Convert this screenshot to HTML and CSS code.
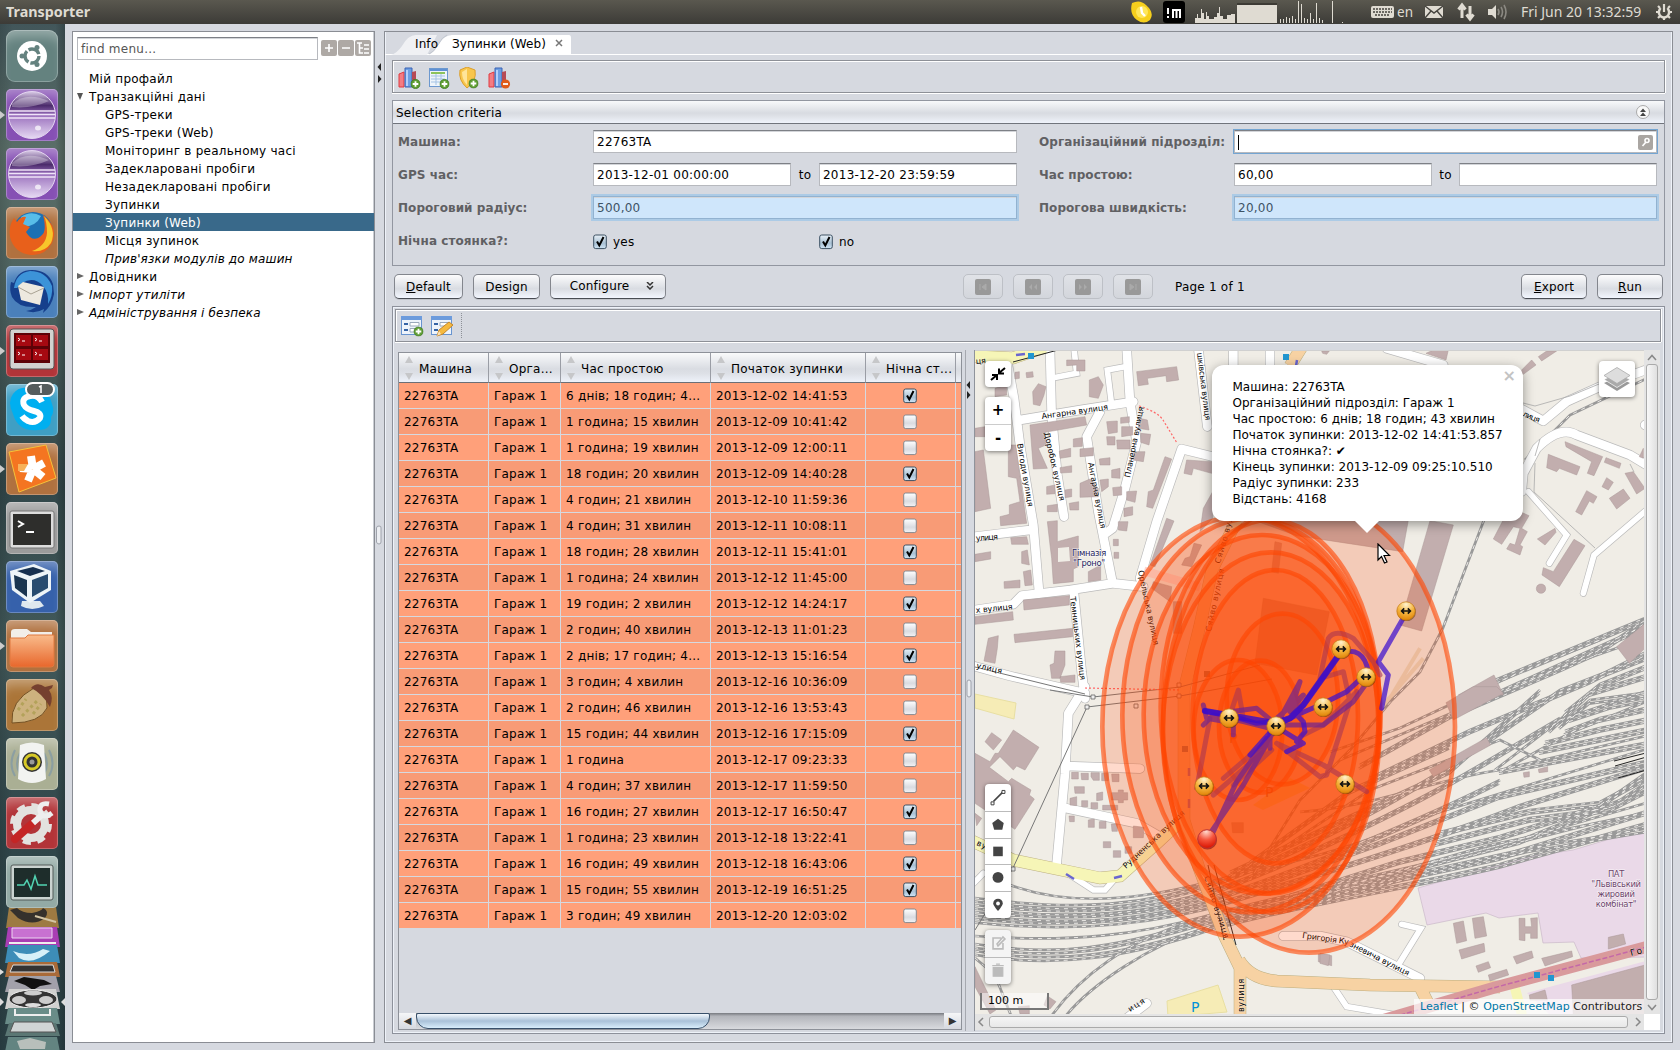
FILE: index.html
```html
<!DOCTYPE html>
<html lang="uk">
<head>
<meta charset="utf-8">
<title>Transporter</title>
<link rel="stylesheet" href="styles.css">
</head>
<body>
<svg class="defs" width="0" height="0">
<defs>
<linearGradient id="sphere" x1="0" y1="0" x2="0" y2="1"><stop offset="0" stop-color="#d9cbe6"/><stop offset=".3" stop-color="#4b2a6b"/><stop offset=".5" stop-color="#9a70bd"/><stop offset="1" stop-color="#e6d9f3"/></linearGradient>
<linearGradient id="box" x1="0" y1="0" x2="0" y2="1"><stop offset="0" stop-color="#fff"/><stop offset=".6" stop-color="#d9dbe0"/><stop offset="1" stop-color="#f2f3f6"/></linearGradient>
<linearGradient id="boxon" x1="0" y1="0" x2="0" y2="1"><stop offset="0" stop-color="#e9f1f8"/><stop offset=".6" stop-color="#a9c1d4"/><stop offset="1" stop-color="#cfe4f5"/></linearGradient>
<radialGradient id="gold" cx=".5" cy=".15" r=".9"><stop offset="0" stop-color="#fff3cf"/><stop offset=".5" stop-color="#f5b540"/><stop offset="1" stop-color="#df7f00"/></radialGradient>
<radialGradient id="ruby" cx=".45" cy=".1" r=".9"><stop offset="0" stop-color="#ffd9cc"/><stop offset=".5" stop-color="#f5553d"/><stop offset="1" stop-color="#d81200"/></radialGradient>
<linearGradient id="folder" x1="0" y1="0" x2="0" y2="1"><stop offset="0" stop-color="#f9bb8b"/><stop offset="1" stop-color="#e8672c"/></linearGradient>
<symbol id="off" viewBox="0 0 14 16"><rect x=".7" y="1" width="12.6" height="13.6" rx="2" fill="url(#box)" stroke="#868a91"/></symbol>
<symbol id="on" viewBox="0 0 14 16"><rect x=".7" y="1" width="12.6" height="13.6" rx="2" fill="url(#boxon)" stroke="#3c5163"/><path d="M4 7.5L6.3 11.5L10.5 3" fill="none" stroke="#000" stroke-width="2"/></symbol>
<symbol id="eclipse" viewBox="0 0 52 52"><circle cx="26" cy="26" r="23.5" fill="url(#sphere)" stroke="#e3d5f0"/><path d="M3 22H49M3 25.5H49M3 29H49" stroke="#efe4f8" stroke-width="1.4"/><path d="M6 15Q20 2 43 12Q26 20 6 18Z" fill="#fff" opacity=".3"/><ellipse cx="32" cy="39" rx="3" ry="2.5" fill="#fff" opacity=".7"/></symbol>
<symbol id="chart" viewBox="0 0 22 22"><path d="M1 7L6 5V20H1Z" fill="#f47c83" stroke="#e03a40"/><path d="M7 1H14V20H7Z" fill="#6d9fe3" stroke="#3a62b5"/><path d="M9 3V19" stroke="#b3d0fb" stroke-width="2"/><path d="M14 5L18 4V19H14Z" fill="#b64a56"/></symbol>
<symbol id="plus" viewBox="0 0 10 10"><circle cx="5" cy="5" r="4.6" fill="#5f9e33" stroke="#3f7a21" stroke-width=".8"/><path d="M5 2.2V7.8M2.2 5H7.8" stroke="#fff" stroke-width="1.8"/></symbol>
<symbol id="stop" viewBox="-10 -10 20 20"><circle cx=".6" cy="1" r="9.3" fill="#5a3400" opacity=".5"/><circle r="9.2" fill="url(#gold)" stroke="#c47a11" stroke-width=".7"/><path d="M-4 0H4M-1.8-2.6L-4.4 0L-1.8 2.6M1.8-2.6L4.4 0L1.8 2.6" fill="none" stroke="#111" stroke-width="1.6"/></symbol>
</defs>
</svg>

<header class="topbar">
  <span class="app-name">Transporter</span>
  <svg class="tray" width="348" height="24" viewBox="1128 0 348 24">
    <path d="M1132 3Q1140 -1 1146 5Q1155 13 1150 20Q1144 25 1137 20Q1129 14 1132 3Z" fill="#f6cf1d"/><circle cx="1142" cy="12" r="6" fill="#ffe65b"/><path d="M1141 7L1142 13L1145 16" fill="none" stroke="#fff" stroke-width="2.4"/>
    <rect x="1163" y="1" width="22" height="22" rx="3" fill="#000"/><path d="M1168 8V14M1168 16V18M1173 18V9M1173 10H1180V18M1176.5 10V18" fill="none" stroke="#fff" stroke-width="2"/>
    <path d="M1195 23V18H1197V14H1198V18H1201V9H1202V13H1204V19H1206V12H1207V16H1209V19H1214V17H1217V13H1219V7H1220V16H1223V19H1227V15H1231V14H1235V23Z" fill="#dfdbd2"/>
    <path d="M1237 5H1277V23H1237Z" fill="#dfdbd2"/><path d="M1237 4H1277" stroke="#24231f"/>
    <path d="M1280.500 23V19M1283.500 23V19M1286.500 23V17M1289.500 23V18M1292.500 23V16M1295.500 23V19M1298.500 23V1M1301.500 23V4M1304.500 23V18M1307.500 23V19M1310.500 23V13M1313.500 23V19M1316.500 23V3M1319.500 23V18M1322.500 23V20M1332.500 23V1M1342.500 23V22" stroke="#dfdbd2" fill="none"/>
    <rect x="1371" y="6" width="23" height="12" rx="2" fill="#dfdbd2"/><path d="M1373 9H1392M1373 12H1392M1375 15H1390" stroke="#45443f" stroke-width="1.3" stroke-dasharray="2 1"/>
    <text x="1397" y="17" class="tray-text" textLength="16" lengthAdjust="spacingAndGlyphs">en</text>
    <rect x="1425" y="6" width="18" height="12" fill="#dfdbd2"/><path d="M1425 6L1434 13L1443 6M1425 18L1431 11M1443 18L1437 11" stroke="#45443f" stroke-width="1.4" fill="none"/>
    <path d="M1462 18V6M1458.500 9.500L1462 5L1465.500 9.500M1470 6V18M1466.500 14.500L1470 19L1473.500 14.500" stroke="#dfdbd2" stroke-width="3" fill="none"/>
  </svg>
  <svg class="tray-end" width="22" height="24" viewBox="0 0 22 24"><path d="M0 9H4L8 5V19L4 15H0Z" fill="#dfdbd2"/><path d="M10 9Q12 12 10 15M13 7Q16 12 13 17M16 5Q20 12 16 19" stroke="#8b8982" stroke-width="1.6" fill="none"/></svg>
  <span class="clock">Fri Jun 20 13:32:59</span>
  <svg class="cog" width="18" height="24" viewBox="0 0 18 24"><path d="M5.500 8Q2 13 6 16.500Q9 18.500 12 16.500Q16 13 12.500 8" fill="none" stroke="#dfdbd2" stroke-width="2.4"/><path d="M9 4V12M9 17V20M1 12H3M15 12H17M3 6L5 8M15 6L13 8M3 18L5 16M15 18L13 16" stroke="#dfdbd2" stroke-width="2.2"/></svg>
</header>

<div class="desktop">
<nav class="launcher">
  <div class="tile t-dash"><svg viewBox="0 0 52 52"><circle cx="26" cy="26" r="15" fill="#fff"/><circle cx="26" cy="26" r="7" fill="none" stroke="#64827f" stroke-width="3.400" stroke-dasharray="12.600 2"/><circle cx="16" cy="26" r="2.500" fill="#64827f"/><circle cx="31" cy="17.500" r="2.500" fill="#64827f"/><circle cx="31" cy="34.500" r="2.500" fill="#64827f"/></svg></div>
  <div class="tile t-violet mark"><svg><use href="#eclipse"/></svg></div>
  <div class="tile t-violet"><svg><use href="#eclipse"/></svg></div>
  <div class="tile t-brown"><svg viewBox="0 0 52 52"><circle cx="27" cy="25" r="20" fill="#1d70b3"/><path d="M15 10Q25 3 35 9Q30 20 16 20Z" fill="#58bde8"/><path d="M37 8Q53 20 46 36Q39 49 25 48Q8 46 4 30Q2 20 8 11L11 15Q15 9 20 10L17 17L24 20L20 25Q27 37 36 28Q41 24 37 8Z" fill="#e8601b"/><path d="M38 9Q51 22 45 36Q38 46 26 44Q40 39 41 26Q41 15 38 9Z" fill="#f7c62b"/></svg></div>
  <div class="tile t-blue"><svg viewBox="0 0 52 52"><path d="M5 16L8 17Q12 4 26 4Q42 4 47 18L48 28Q46 40 37 47L38 43Q30 48 20 45Q26 44 30 41Q12 42 6 31Q3 24 5 16Z" fill="#163f8c"/><path d="M8 22Q10 7 24 5Q40 5 46 20Q47 30 42 38Q43 27 37 20Q28 10 16 17L11 22Z" fill="#3c93d8"/><path d="M12 20L17 16L38 21L34 39L15 34Z" fill="#eee9df"/><path d="M12 21L25 28L38 22" fill="none" stroke="#aaa394"/></svg></div>
  <div class="tile t-red mark"><svg viewBox="0 0 52 52"><rect x="4" y="4" width="44" height="40" rx="3" fill="#d2d2d0" stroke="#555"/><rect x="8" y="8" width="36" height="30" fill="#5d0207"/><path d="M10 10H25V21H10ZM27 10H42V21H27ZM10 24H25V35H10ZM27 24H42V35H27Z" fill="#a60911"/><path d="M12 13L14 14.500L12 16M16 16H19M29 13L31 14.500L29 16M33 16H36M12 27L14 28.500L12 30M16 30H19M29 27L31 28.500L29 30M33 30H36" stroke="#fff" fill="none"/></svg></div>
  <div class="tile t-cyan"><svg viewBox="0 0 52 52"><path d="M7 10Q14 1 24 5Q42 3 46 20Q49 28 45 33Q46 46 32 46Q12 48 7 30Q1 18 7 10Z" fill="#00aff0"/><path d="M36 18Q32 10 24 12Q15 14 18 21Q20 25 28 27Q36 29 34 34Q29 40 22 37Q18 35 16 32" fill="none" stroke="#fff" stroke-width="6"/><rect x="20" y="-1" width="28" height="13" rx="6.500" fill="#555d5d" stroke="#fff" stroke-width="2"/><path d="M33 3L35 2V9" stroke="#fff" stroke-width="1.500" fill="none"/></svg></div>
  <div class="tile t-brown mark"><svg viewBox="0 0 52 52"><path d="M3 9L40 2L50 35L13 49Z" fill="#f47521" stroke="#f6c23a"/><path d="M27 26L25 13M27 26L38 20M27 26L37 34M27 26L22 38M27 26L14 25" stroke="#fff" stroke-width="8"/><path d="M12 21H22L18 28H12Z" fill="#f7b25a"/></svg></div>
  <div class="tile t-gray"><svg viewBox="0 0 52 52"><rect x="4" y="9" width="44" height="37" rx="2" fill="#ddd" stroke="#777"/><rect x="7" y="12" width="38" height="31" fill="#2e2e2c"/><path d="M12 19L17 22L12 25M20 30H28" stroke="#fff" stroke-width="2" fill="none"/></svg></div>
  <div class="tile t-navy"><svg viewBox="0 0 52 52"><path d="M16 40H34L38 45Q26 51 15 45Z" fill="#dfe8ee"/><path d="M4 10L28 3L45 10V29L24 42L6 29Z" fill="#edf4f8"/><path d="M8 14L21 19V36L9 27Z" fill="#1a3550"/><path d="M26 19L42 13V27L26 36Z" fill="#284c70"/><path d="M11 10L27 6L39 10L24 15Z" fill="#163050"/></svg></div>
  <div class="tile t-brown mark"><svg viewBox="0 0 52 52"><path d="M5 12Q5 9 9 9H21L25 12H46V24H5Z" fill="#f2eee9"/><path d="M4 18H19L22 15H48V44Q48 47 45 47H7Q4 47 4 44Z" fill="url(#folder)" stroke="#e0783f"/></svg></div>
  <div class="tile t-tan"><svg viewBox="0 0 52 52"><path d="M28 9Q42 12 41 29Q34 44 6 44Q4 22 28 9Z" fill="#cdb27e" stroke="#745124"/><path d="M12 31L20 20M16 37L31 22M27 35L35 25" stroke="#b3a25a" stroke-width="3" stroke-dasharray="3 3"/><path d="M25 9Q31 2 39 8L47 6L46 9L43 11Q48 18 44 28Q36 14 25 9Z" fill="#75402f"/></svg></div>
  <div class="tile t-sage"><svg viewBox="0 0 52 52"><path d="M9 12Q2 26 9 38M14 15Q8 26 14 36M43 12Q50 26 43 38M38 15Q44 26 38 36" fill="none" stroke="#7793aa" stroke-width="2" opacity=".6"/><path d="M14 7Q26 2 38 7L40 41Q26 49 12 41Z" fill="#f2f3f1"/><circle cx="26" cy="24" r="10" fill="#333"/><circle cx="26" cy="24" r="7" fill="none" stroke="#d7c927" stroke-width="3"/><circle cx="26" cy="24" r="2.500" fill="#999"/></svg></div>
  <div class="tile t-red"><svg viewBox="0 0 52 52"><circle cx="25" cy="27" r="14" fill="none" stroke="#e3e2df" stroke-width="8"/><circle cx="25" cy="27" r="18.500" fill="none" stroke="#e3e2df" stroke-width="5" stroke-dasharray="8 6.500"/><path d="M9 42L27 26" stroke="#c42525" stroke-width="8" stroke-linecap="round"/><path d="M27 26L37 17" stroke="#eee" stroke-width="6"/><path d="M43 7Q33 5 34 14Q37 23 46 16" stroke="#eee" stroke-width="5" fill="none"/></svg></div>
  <div class="tile t-mint"><svg viewBox="0 0 52 52"><rect x="5" y="9" width="42" height="35" rx="2" fill="#cad3d0" stroke="#525b59"/><rect x="8" y="12" width="36" height="29" fill="#1e2d2b"/><path d="M11 29H18L21 24L25 33L29 20L32 29H41" fill="none" stroke="#52d3b2" stroke-width="1.500"/></svg></div>
  <svg class="stack" viewBox="0 905 65 145">
    <path d="M9 905H56L59 926H6Z" fill="#9d7a42"/><path d="M10 908L17 906Q22 911 32 911Q42 909 43 906Q50 909 45 916Q33 925 18 916Z" fill="#35312c"/><path d="M35 914L56 920" stroke="#d3c5a4" stroke-width="2"/>
    <path d="M8 925H57L60 945H5Z" fill="#a93eb4"/><path d="M12 926H52V936H12Z" fill="#c871d1" stroke="#ecd6f0"/><path d="M9 941H56" stroke="#eee" stroke-width="2"/>
    <path d="M8 943H57L60 961H5Z" fill="#3d8db8"/><path d="M13 949Q29 956 43 947L50 949Q32 964 19 956Z" fill="#d7f0f8"/>
    <path d="M8 960H57L60 975H5Z" fill="#a96b39"/><path d="M13 963H53L55 970H10Z" fill="#333" stroke="#ddd"/>
    <path d="M9 974H56L60 990H5Z" fill="#a2a1aa"/><path d="M14 979L24 975L44 978L52 982L40 984L33 988L25 983Z" fill="#111"/>
    <path d="M9 987H56L60 1007H5Z" fill="#d1d1d0"/><ellipse cx="33" cy="997" rx="24" ry="9" fill="#343434" stroke="#eee"/><ellipse cx="19" cy="998" rx="7" ry="4" fill="#ccc"/><ellipse cx="46" cy="998" rx="7" ry="4" fill="#ccc"/><ellipse cx="33" cy="991" rx="9" ry="2.500" fill="#ccc"/><ellipse cx="33" cy="1003" rx="8" ry="2" fill="#ddd"/>
    <path d="M8 1006H57L60 1022H5Z" fill="#698c88"/><path d="M15 1007V1013H50V1007" fill="none" stroke="#eee" stroke-width="2"/>
    <path d="M9 1021H56L60 1034H5Z" fill="#5b7774"/><path d="M14 1020H52L56 1030H10Z" fill="#d0d5d5" stroke="#555"/>
    <path d="M8 1035H57L60 1050H5Z" fill="#638481"/><path d="M17 1039L30 1036L46 1040L45 1047H20Z" fill="#b8bfbb"/>
    <path d="M0 967L4 970L0 973M0 996L4 1000L0 1004M65 996L61 1000L65 1004" fill="#ddd"/>
  </svg>
</nav>

<main class="work">
  <aside class="sidebar">
    <div class="find">
      <div class="input find-input">find menu...</div>
      <svg width="50" height="16" viewBox="0 0 50 16"><rect width="16" height="16" rx="2" fill="#aea9a5"/><rect x="17" width="16" height="16" rx="2" fill="#aea9a5"/><rect x="34" width="16" height="16" rx="2" fill="#aea9a5"/><path d="M8 4V12M4 8H12M21 8H29M36 3H41M38.500 3V13H42M38.500 8H42M43 5H48M43 9H48M43 13H48" fill="none" stroke="#fff" stroke-width="1.600"/></svg>
    </div>
    <ul class="tree">
      <li>Мій профайл</li>
      <li class="open">Транзакційні дані</li>
      <li class="sub">GPS-треки</li>
      <li class="sub">GPS-треки (Web)</li>
      <li class="sub">Моніторинг в реальному часі</li>
      <li class="sub">Задекларовані пробіги</li>
      <li class="sub">Незадекларовані пробіги</li>
      <li class="sub">Зупинки</li>
      <li class="sub selected">Зупинки (Web)</li>
      <li class="sub">Місця зупинок</li>
      <li class="sub it">Прив'язки модулів до машин</li>
      <li class="closed">Довідники</li>
      <li class="closed it">Імпорт утиліти</li>
      <li class="closed it">Адміністрування і безпека</li>
    </ul>
  </aside>
  <div class="splitter"><svg width="9" height="1012" viewBox="0 0 9 1012"><path d="M6 32V40L2.500 36ZM3 44V52L6.500 48Z" fill="#222"/><path d="M1.500 497Q1.500 495 4 495T6 497V511Q6 513 4 513T1.500 511Z" fill="#eceef2" stroke="#9ea2ab"/></svg></div>

  <section class="editor">
    <div class="tabs">
      <svg class="tab-shapes" width="200" height="22" viewBox="385 33 200 22"><path d="M391 55Q397 53 402 46Q408 35 416 35H437L427 55Z" fill="#f0f1f4"/><path d="M429 55Q434 52 438 45Q444 35 452 35H569Q571 35 571 38V55Z" fill="#fff"/><path d="M429 54Q434 52 438 45Q442 37 447 35" fill="none" stroke="#c2c7d0"/></svg>
      <span class="tab tab-info">Info</span><span class="tab tab-active">Зупинки (Web)</span><svg class="tab-close" width="8" height="8" viewBox="0 0 8 8"><path d="M1 1L7 7M7 1L1 7" stroke="#777" stroke-width="1.500"/></svg>
    </div>
    <div class="page">
      <div class="toolbar tools">
        <svg width="24" height="24" viewBox="0 0 24 24"><use href="#chart" width="22" height="22"/><use href="#plus" x="12.500" y="12" width="10" height="10"/></svg>
        <svg width="24" height="24" viewBox="0 0 24 24"><rect x="1.500" y="1.500" width="18" height="18" fill="#eef4fa" stroke="#6c98cf"/><path d="M2 3H19" stroke="#5f91d4" stroke-width="2"/><path d="M3 6H17" stroke="#8cc35b" stroke-width="2"/><path d="M3 9H17M3 12H17M3 15H17M8 7V18M13 7V18" stroke="#a4c3e5"/><use href="#plus" x="11.500" y="12" width="10" height="10"/></svg>
        <svg width="24" height="24" viewBox="0 0 24 24"><path d="M9 0L17 3Q19 14 9 21Q0 13 2 3Z" fill="#f8c64c" stroke="#dc9f2c"/><path d="M9 2V18Q4 13 4 5Z" fill="#ffe59a"/><use href="#plus" x="10.500" y="11.500" width="10" height="10"/></svg>
        <svg width="24" height="24" viewBox="0 0 24 24"><use href="#chart" width="22" height="22"/><circle cx="17.500" cy="17" r="4.600" fill="#df5b19"/><path d="M15 17H20" stroke="#fff" stroke-width="1.800"/></svg>
      </div>
      <section class="criteria">
        <header><span>Selection criteria</span><svg width="16" height="16" viewBox="0 0 16 16"><circle cx="8" cy="8" r="6.500" fill="#f8f8f8" stroke="#aaa"/><path d="M5 8L8 4.500L11 8ZM5 12L8 8.500L11 12Z" fill="#444"/></svg></header>
        <div class="form">
          <label>Машина:</label><div class="input wide">22763TA</div><label class="second">Організаційний підрозділ:</label><div class="input wide focus"><i></i><svg width="15" height="15" viewBox="0 0 15 15"><rect width="15" height="15" rx="2" fill="#aaa6a2"/><circle cx="9" cy="5.500" r="2" fill="none" stroke="#fff" stroke-width="1.600"/><path d="M8 7L4.500 11" stroke="#fff" stroke-width="1.600"/></svg></div>
          <label>GPS час:</label><div class="range"><div class="input">2013-12-01 00:00:00</div><span>to</span><div class="input">2013-12-20 23:59:59</div></div><label class="second">Час простою:</label><div class="range"><div class="input">60,00</div><span>to</span><div class="input"></div></div>
          <label>Пороговий радіус:</label><div class="input wide blue">500,00</div><label class="second">Порогова швидкість:</label><div class="input wide blue">20,00</div>
          <label>Нічна стоянка?:</label><div class="checks"><span><svg width="14" height="16"><use href="#on"/></svg>yes</span><span><svg width="14" height="16"><use href="#on"/></svg>no</span></div>
        </div>
      </section>
      <div class="actions">
        <button class="b69"><u>D</u>efault</button><button class="b67">Design</button><button class="b116">Configure <svg width="8" height="8" viewBox="0 0 8 8"><path d="M1 0L4 3L7 0M1 4L4 7L7 4" fill="none" stroke="#333" stroke-width="1.500"/></svg></button>
        <span class="pager">
          <button><svg width="16" height="16"><rect width="16" height="16" rx="2" fill="#999"/><path d="M5 5V11M11 5L7 8L11 11Z" stroke="#aaa" fill="#aaa"/></svg></button>
          <button><svg width="16" height="16"><rect width="16" height="16" rx="2" fill="#999"/><path d="M7 5L4 8L7 11ZM12 5L9 8L12 11Z" fill="#aaa"/></svg></button>
          <button><svg width="16" height="16"><rect width="16" height="16" rx="2" fill="#999"/><path d="M4 5L7 8L4 11ZM9 5L12 8L9 11Z" fill="#aaa"/></svg></button>
          <button><svg width="16" height="16"><rect width="16" height="16" rx="2" fill="#999"/><path d="M11 5V11M5 5L9 8L5 11Z" stroke="#aaa" fill="#aaa"/></svg></button>
        </span>
        <span class="page-no">Page 1 of 1</span>
        <button class="b66 push"><u>E</u>xport</button><button class="b66"><u>R</u>un</button>
      </div>
      <section class="result">
        <div class="toolbar rtools">
          <svg width="24" height="22" viewBox="0 0 24 22"><rect x=".5" y=".5" width="20" height="18" fill="#edf3fb" stroke="#6894cf"/><path d="M0 2H21" stroke="#6c9bdc" stroke-width="4"/><path d="M3 8H7M3 14H7" stroke="#3563a5" stroke-width="2"/><path d="M9 6.500H18V10H9ZM9 12.500H15V16H9Z" fill="#fff" stroke="#9aa9bc"/><use href="#plus" x="12.500" y="10.500" width="10" height="10"/></svg>
          <svg width="24" height="22" viewBox="0 0 24 22"><rect x=".5" y=".5" width="20" height="18" fill="#edf3fb" stroke="#6894cf"/><path d="M0 2H21" stroke="#6c9bdc" stroke-width="4"/><path d="M3 8H7M3 14H7" stroke="#3563a5" stroke-width="2"/><path d="M9 6.500H18V10H9Z" fill="#fff" stroke="#9aa9bc"/><path d="M6 20L8 14L18 6L22 9L12 18Z" fill="#f5b93f" stroke="#c4862a"/><path d="M6 20L8 15L10 18Z" fill="#f7e2c0"/></svg>
          <i class="dots"></i>
        </div>
        <div class="split">
          <div class="table-pane">
            <table>
              <colgroup><col class="c1"><col class="c2"><col class="c3"><col class="c4"><col class="c5"><col class="c6"></colgroup>
              <thead><tr><th>Машина</th><th>Орга...</th><th>Час простою</th><th>Початок зупинки</th><th>Нічна ст...</th><th class="last"></th></tr></thead>
              <tbody>
<tr><td>22763TA</td><td>Гараж 1</td><td>6 днів; 18 годин; 4...</td><td>2013-12-02 14:41:53</td><td><svg><use href="#on"/></svg></td><td></td></tr>
<tr><td>22763TA</td><td>Гараж 1</td><td>1 година; 15 хвилин</td><td>2013-12-09 10:41:42</td><td><svg><use href="#off"/></svg></td><td></td></tr>
<tr><td>22763TA</td><td>Гараж 1</td><td>1 година; 19 хвилин</td><td>2013-12-09 12:00:11</td><td><svg><use href="#off"/></svg></td><td></td></tr>
<tr><td>22763TA</td><td>Гараж 1</td><td>18 годин; 20 хвилин</td><td>2013-12-09 14:40:28</td><td><svg><use href="#on"/></svg></td><td></td></tr>
<tr><td>22763TA</td><td>Гараж 1</td><td>4 годин; 21 хвилин</td><td>2013-12-10 11:59:36</td><td><svg><use href="#off"/></svg></td><td></td></tr>
<tr><td>22763TA</td><td>Гараж 1</td><td>4 годин; 31 хвилин</td><td>2013-12-11 10:08:11</td><td><svg><use href="#off"/></svg></td><td></td></tr>
<tr><td>22763TA</td><td>Гараж 1</td><td>18 годин; 28 хвилин</td><td>2013-12-11 15:41:01</td><td><svg><use href="#on"/></svg></td><td></td></tr>
<tr><td>22763TA</td><td>Гараж 1</td><td>1 година; 24 хвилин</td><td>2013-12-12 11:45:00</td><td><svg><use href="#off"/></svg></td><td></td></tr>
<tr><td>22763TA</td><td>Гараж 1</td><td>19 годин; 2 хвилин</td><td>2013-12-12 14:24:17</td><td><svg><use href="#on"/></svg></td><td></td></tr>
<tr><td>22763TA</td><td>Гараж 1</td><td>2 годин; 40 хвилин</td><td>2013-12-13 11:01:23</td><td><svg><use href="#off"/></svg></td><td></td></tr>
<tr><td>22763TA</td><td>Гараж 1</td><td>2 днів; 17 годин; 4...</td><td>2013-12-13 15:16:54</td><td><svg><use href="#on"/></svg></td><td></td></tr>
<tr><td>22763TA</td><td>Гараж 1</td><td>3 годин; 4 хвилин</td><td>2013-12-16 10:36:09</td><td><svg><use href="#off"/></svg></td><td></td></tr>
<tr><td>22763TA</td><td>Гараж 1</td><td>2 годин; 46 хвилин</td><td>2013-12-16 13:53:43</td><td><svg><use href="#off"/></svg></td><td></td></tr>
<tr><td>22763TA</td><td>Гараж 1</td><td>15 годин; 44 хвилин</td><td>2013-12-16 17:15:09</td><td><svg><use href="#on"/></svg></td><td></td></tr>
<tr><td>22763TA</td><td>Гараж 1</td><td>1 година</td><td>2013-12-17 09:23:33</td><td><svg><use href="#off"/></svg></td><td></td></tr>
<tr><td>22763TA</td><td>Гараж 1</td><td>4 годин; 37 хвилин</td><td>2013-12-17 11:59:50</td><td><svg><use href="#off"/></svg></td><td></td></tr>
<tr><td>22763TA</td><td>Гараж 1</td><td>16 годин; 27 хвилин</td><td>2013-12-17 16:50:47</td><td><svg><use href="#on"/></svg></td><td></td></tr>
<tr><td>22763TA</td><td>Гараж 1</td><td>1 година; 23 хвилин</td><td>2013-12-18 13:22:41</td><td><svg><use href="#off"/></svg></td><td></td></tr>
<tr><td>22763TA</td><td>Гараж 1</td><td>16 годин; 49 хвилин</td><td>2013-12-18 16:43:06</td><td><svg><use href="#on"/></svg></td><td></td></tr>
<tr><td>22763TA</td><td>Гараж 1</td><td>15 годин; 55 хвилин</td><td>2013-12-19 16:51:25</td><td><svg><use href="#on"/></svg></td><td></td></tr>
<tr><td>22763TA</td><td>Гараж 1</td><td>3 годин; 49 хвилин</td><td>2013-12-20 12:03:02</td><td><svg><use href="#off"/></svg></td><td></td></tr>
              </tbody>
            </table>
            <div class="hscroll"><span class="arr">◀</span><div class="track"><div class="thumb"></div></div><span class="arr">▶</span></div>
          </div>
          <div class="vsplit"><svg width="12" height="680" viewBox="0 0 12 680"><path d="M8 31V39L4.500 35ZM5 41V49L8.500 45Z" fill="#222"/><rect x="5" y="330" width="4" height="17" rx="2" fill="#eceef2" stroke="#9ea2ab"/></svg></div>
          <div class="map-pane">
            <div class="map">
<svg class="map-svg" width="669" height="663" viewBox="975 351 669 663">
<defs>
<g id="roadsA">
  <g transform="translate(970 345) scale(.33333)">
    <path d="M110 40L132 160L150 300L190 540L207 740M240 15L245 210L262 390L282 515M150 225L330 195L490 170M470 10L480 170L500 290L465 430L428 550L400 570M390 200L350 275L385 500L425 700M15 575L180 555M0 797L130 778L155 752L300 735L430 715L520 725M312 745L335 980L345 1060M0 960L120 993L345 1045M510 700L560 530L635 312L740 338M685 10L712 245M790 10V70M900 10V70"/>
  </g>
  <g transform="translate(1320 345) scale(.33333)"><path d="M200 10L370 60M600 190L670 228L740 170L840 125L990 70M605 440L610 385L650 310Q720 240 770 270L930 330L980 360M1000 240H975"/></g>
  <g transform="translate(970 690) scale(.33333)"><path d="M345 -10L295 70L285 250L260 520M290 228L510 236M290 355L500 400L570 440M450 1000L530 940"/></g>
  <g transform="translate(1320 690) scale(.33333)"><path d="M-110 738H0L80 755L190 810L300 865"/></g>
</g>
<g id="roadsB">
  <g transform="translate(970 345) scale(.33333)"><path d="M425 180L412 75L465 65M258 97L320 85L312 10"/></g>
  <g transform="translate(1320 345) scale(.33333)"><path d="M625 440L740 570L688 655M980 495L822 630L790 745"/></g>
  <g transform="translate(970 690) scale(.33333)"><path d="M270 535L370 600H405L440 560M-10 600L40 550"/></g>
  <g transform="translate(1320 690) scale(.33333)"><path d="M245 703L302 716L238 820M40 890L80 950L230 975"/></g>
</g>
<g id="yard">
  <path d="M975 898C1080 912 1150 905 1220 880S1400 800 1470 752L1560 690L1650 655M975 905C1080 918 1160 910 1225 886S1400 812 1480 765L1560 718M975 912C1080 924 1160 915 1230 892S1420 820 1500 780M975 919C1080 930 1160 920 1235 898S1430 840 1520 805L1650 765"/>
  <path d="M975 944C1060 958 1120 945 1190 925S1430 872 1500 856L1650 810M975 951C1060 966 1130 952 1200 930S1430 881 1500 864L1650 822"/>
  <path d="M1230 872L1330 825L1450 770L1540 690M1260 885L1380 842L1500 795L1650 760M1250 862L1350 790L1450 745"/>
  <path d="M1290 895L1400 860L1500 836L1600 805L1650 770M1300 898L1410 868L1520 840L1620 800L1650 780M1310 902L1420 872L1530 848L1650 828"/>
  <path d="M1495 680L1650 616M1500 691L1640 628M1360 765L1450 715L1560 668L1600 650L1650 617M1370 778L1470 730L1590 680L1650 650"/>
  <path d="M1540 750L1600 738L1650 728M1500 770L1580 755L1650 742M1560 725L1590 700L1650 692M1570 718L1610 705L1650 697M1565 731L1600 718L1650 707M1545 742L1600 728L1650 718M1550 729L1590 692L1650 674M1565 712L1600 684L1650 664"/>
  <path d="M1440 832L1530 810L1600 802L1650 775M1436 842L1530 818L1610 808L1650 788"/>
</g>
<g id="lines">
  <path d="M1010 885C1060 903 1120 904 1200 884S1340 855 1430 815L1650 748M975 936C1070 943 1140 935 1210 915S1440 862 1500 845L1650 802"/>
  <path d="M1050 1018C1080 975 1130 940 1190 922S1430 868 1520 842L1600 822M1064 1018C1090 985 1150 945 1205 928S1430 862 1490 845L1650 812"/>
  <path d="M1280 850L1370 790L1500 740L1540 760M1300 812C1380 806 1430 780 1500 770L1650 735M1495 770L1560 720L1650 690M1500 772L1570 733L1650 700"/>
  <path d="M1330 752L1400 728L1520 672L1600 640M1340 760L1440 718L1540 675L1640 640"/>
  <path d="M1650 377L1570 415L1525 460M1484 520L1463 575L1443 628L1420 672L1392 700L1350 750L1300 800L1250 880"/>
  <path d="M975 958L995 975L1012 1018"/>
</g>
<g id="rails"><use href="#yard"/><use href="#yard" x="-1" y="3.600"/><use href="#lines"/></g>
<g id="orange"><path d="M1303 345L1290 366M1237 520L1212 570L1200 625L1184 690V820L1199 868L1224 935L1240 968V1018M1239 960Q1250 979 1277 981L1370 985L1500 987M1420 987L1428 1003"/></g>
<g id="yellow"><path d="M970 356L1013 358L1045 347M970 840L1013 860L1100 878L1120 876L1157 843L1184 818"/></g>
</defs>
<rect x="975" y="351" width="669" height="663" fill="#f0ede6"/>
<path d="M1418 888L1527 857L1573 850L1620 836L1650 831V957L1581 958L1574 942L1543 943L1538 913L1499 918L1486 913L1427 925Z" fill="#ead9e8" stroke="#c4b2c4" stroke-width=".6"/>
<path d="M1527 993L1650 960V1015H1550Z" fill="#ead9e8"/>
<path d="M975 694L1016 703L1014 719L975 708ZM1167 1001L1218 985L1227 1012L1168 1017Z" fill="#f6ecb6" stroke="#e8dfa3"/>
<path d="M1253 805L1290 778L1310 788L1263 810Z" fill="#f6dc8a"/>
<use href="#rails" class="rail-base"/><use href="#rails" class="rail-dash"/>
<use href="#roadsA" class="road-case-a"/><use href="#roadsB" class="road-case-b"/>
<use href="#yellow" class="yellow-case"/>
<use href="#roadsA" class="road-a"/><use href="#roadsB" class="road-b"/>
<use href="#yellow" class="yellow-fill"/><use href="#orange" class="orange-case"/><use href="#orange" class="orange-fill"/>
<path d="M1515 988L1522 1015" stroke="#f5f5b5" stroke-width="10"/>
<path d="M1380 1021L1493 988L1650 946" fill="none" stroke="#d99a9c" stroke-width="12"/><path d="M1380 1021L1493 988L1650 946" fill="none" stroke="#c468a8" stroke-width="1.500" stroke-dasharray="5 2"/>
<path d="M1144 571L1200 587" stroke="#fbd5cf" stroke-width="9"/>
<g transform="translate(970 345) scale(.33333)" class="bld">
<path d="M500 80L620 65L626 105L590 110L588 92L532 100L535 118L505 122ZM290 45H345V78H320V60L290 62ZM135 82L148 80V100L135 102ZM168 83L188 80L190 96L170 98ZM188 140L205 116L228 125L222 150L210 182L190 178ZM358 105L385 95L400 120L385 160L358 155ZM75 130L110 120V150L75 155ZM180 240L345 215L350 240L225 262L228 300L205 310L232 370L190 372ZM15 250L45 245V275H15ZM15 320L40 315L62 490L15 500ZM90 515L118 508V480L150 470L140 400L115 395V300L137 300L165 500L170 535L92 542ZM410 230L442 228V262L415 266ZM452 218L478 215V232L452 235ZM508 220L532 225L537 255L505 250ZM455 245L488 245V270L455 275ZM512 265L542 268L537 300L512 292ZM410 275L435 275V300H412ZM310 282L337 278V304L310 306ZM440 285L480 285V312L442 312ZM330 312L370 308V332L330 335ZM268 318L302 310V335L270 340ZM490 320L525 320L520 350L488 345ZM388 342L420 338V360H390ZM270 368L305 362V382L272 384ZM425 375L450 370V400L425 398ZM230 425L255 420V446L230 448ZM330 415L360 402L385 430V455L330 457ZM390 405L415 402V425L395 440ZM285 435L305 432V455L285 458ZM428 428L455 425V450L430 452ZM470 440L500 438L495 472L470 465ZM298 475L326 470V495H300ZM232 482L262 478V500H232ZM462 490L488 485V510L462 515ZM445 530L474 530L470 558L445 555ZM232 530L262 527V590L325 573V665L310 672V710L250 716L245 640L240 600ZM355 680L392 660V705L355 710ZM430 583H445V602H430ZM432 622H446V640H432ZM122 578L170 575L175 598H125ZM155 620L172 615L178 660L155 655ZM160 680L182 675L187 720L165 722ZM15 628L62 620V642L15 650ZM102 710L150 705V728L103 730ZM160 765L298 752V780L162 795ZM15 815L128 800L130 825L15 838ZM132 868L308 850V875L135 893ZM55 880L85 872L82 910L75 955L42 948ZM255 918H285V960L270 1000L245 1000L240 960L252 955ZM270 995L315 990V1012H272ZM585 335L605 342L548 490L530 485L535 440L550 435ZM590 520L612 528L555 665L540 660ZM672 595L695 600L665 665L635 660L645 640L660 635ZM650 345L725 350V385L670 370L665 390L642 385ZM700 490L728 440V520L690 560ZM915 590L935 595L925 685L905 680ZM550 710L605 725L600 770L545 730ZM610 770H635V865H610Z"/>
<path d="M880 760L1078 800L1040 990L855 955Z"/>
</g>
<path d="M1058 548L1069 547L1070 561L1058 562Z" fill="#f0ede6"/>
<g transform="translate(1320 345) scale(.33333)" class="bld">
<path d="M340 15H385L378 45L318 25ZM655 35L680 18H710L665 48ZM600 80L635 45L648 60L610 88ZM735 290L848 335L822 392L802 385L815 350L738 305ZM685 328L780 365L770 390L718 370L710 380L680 368ZM858 338L903 355L898 370L853 352ZM860 398L880 412L865 435L846 425ZM915 385L940 380L975 430L950 447ZM868 460L910 432L930 460L890 492ZM800 437L831 455L820 475L808 468L785 510L767 500ZM970 310V340L958 335ZM600 500L627 512L605 550L622 560L600 600L608 605L600 630L560 612L570 595L585 600L600 550L580 545L545 598L520 582L560 505ZM652 582L705 550L708 562L675 600ZM762 583L795 602L718 725L666 690L670 668L700 680ZM-200 525H265L248 620L-70 572ZM330 527L400 540L305 858L240 840ZM890 905L975 835V910L928 955ZM415 1050L522 990L550 1050ZM5 18H28L20 28L8 25Z"/><circle cx="663" cy="731" r="14"/>
</g>
<g transform="translate(970 690) scale(.33333)" class="bld">
<path d="M15 190L60 215L75 190L85 190L130 120L207 172L165 240L140 228L130 240L90 200L58 232L115 275L125 265L183 300L178 315L193 327L135 418L45 360L15 340ZM65 128L95 150L70 180L45 155ZM15 370L35 385L20 407ZM305 247H325V267H305ZM333 250H355V269H335ZM363 260V248H388V271H370ZM395 250H415V272H395ZM425 252H447V275H427ZM313 290H343V310H315ZM380 310L398 306V330L380 332ZM300 325L320 320V347L300 345ZM335 332H353V350H335ZM363 338H383V356H363ZM398 346H443V360H398ZM425 308H445V300H460V308H473V330H460V338H445V330H425ZM297 378H313V395H299ZM355 390L373 387V412H355ZM388 395L408 393V415H388ZM424 402H442V424H426ZM490 408L522 412L520 443H490ZM400 455H422V473H400ZM430 482H452V502H430ZM465 470H485V490H465ZM15 830L78 960L60 972L15 890ZM145 950L178 947V972H150ZM232 918L258 935L240 957L222 945ZM785 398L820 398V428H788ZM1045 792L1085 797V827L1045 815Z"/></g>
<g transform="translate(1320 690) scale(.33333)" class="bld">
<path d="M378 38L460 -10H530L550 10L400 90ZM328 240L500 143L512 165L340 260ZM610 248L628 245V260L612 262ZM655 238L683 230V245L657 248ZM400 700L430 693L440 752L410 760ZM457 685L490 680L500 738L465 745ZM597 685H615V710H635L632 685L652 683V745H632V730H615V752L598 750ZM417 780L492 760L495 785L425 807ZM865 742L910 732L917 762L865 777ZM468 828L505 815L512 833L475 847ZM505 855L560 838L566 855L510 873ZM580 800L635 783L640 803L590 822ZM665 805L755 783L758 800L675 828ZM755 885L975 825V975H760ZM628 915L675 900L682 930H630ZM0 790L30 795L25 827L0 820Z"/></g>
<path d="M1050 690L1093 697L1180 687L1260 665M1087 707L1180 696L1272 679M1087 707L1013 868L975 930M975 667L1085 694" fill="none" stroke="#777" stroke-width="1"/>
<path d="M1139 406Q1158 412 1163 420L1177 443M1085 688L1180 690" fill="none" stroke="#f66" stroke-width="1.200" stroke-dasharray="2 2"/>
<path d="M1535 463L1534 492L1595 548M1523 403L1535 406L1570 396L1599 384M1630 464L1634 472M1540 439L1535 456" fill="none" stroke="#aaa" stroke-width=".8"/>
<path d="M1614 761L1650 752M1615 766L1650 756M1618 778L1650 769M1208 865L1224 940M1214 865L1236 945M1013 362L1058 350" stroke="#222" fill="none"/>
<g class="pole"><path d="M1091 695h4v4h-4ZM1085 705h4v4h-4ZM1134 704h4v4h-4ZM1177 683h4v4h-4ZM1177 694h4v4h-4ZM1011 867h4v4h-4Z"/></g>
<path d="M1204 671h6v6h-6ZM1182 746h6v6h-6Z" fill="#777"/>
<path d="M1028 353H1034V359H1028ZM1283 354H1289V360H1283ZM1534 972H1540V978H1534ZM1548 975H1554V981H1548Z" fill="#2196d0"/>
<path d="M1016 355L1025 354M1066 874L1074 879M1114 878L1122 876M1297 360L1296 366M1189 768V776M1189 799V808" stroke="#6a66cf" stroke-width="2.500"/>
<g class="street">
<text transform="translate(1042 419) rotate(-8)" textLength="67">Ангарна вулиця</text>
<text transform="translate(1017 444) rotate(80)" textLength="64">Вигоди вулиця</text>
<text transform="translate(1044 433) rotate(77)" textLength="70">Доробок вулиця</text>
<text transform="translate(1088 463) rotate(79)" textLength="67">Ангарна вулиця</text>
<text transform="translate(1130 478) rotate(-79)" textLength="72">Планерна вулиця</text>
<text transform="translate(1197 353) rotate(83)" textLength="68">шківська вулиця</text>
<text transform="translate(976 541) rotate(-4)" textLength="22">улиця</text>
<text transform="translate(976 613) rotate(-6)" textLength="37">х вулиця</text>
<text transform="translate(1070 597) rotate(83)" textLength="84">Темницьких вулиця</text>
<text transform="translate(976 668) rotate(13)" textLength="26">улиця</text>
<text transform="translate(1138 571) rotate(78)" textLength="76">Орельська вулиця</text>
<text transform="translate(1220 564) rotate(-74)" textLength="48">Сяйво вул</text>
<text transform="translate(1211 632) rotate(-78)" textLength="64">Сяйво вулиця</text>
<text transform="translate(1126 869) rotate(-43)" textLength="81">Рудненська вулиця</text>
<text transform="translate(1204 877) rotate(72)" textLength="65">Сяйво вулиця</text>
<text transform="translate(1244 1012) rotate(-90)" textLength="33">вулиця</text>
<text transform="translate(1302 938) rotate(8)" textLength="47">Григорія Ку</text>
<text transform="translate(1349 946) rotate(27)" textLength="66">зневича вулиця</text>
<text transform="translate(976 845) rotate(25)" textLength="10">ву</text>
<text transform="translate(1130 1012) rotate(-32)" textLength="18">иця</text>
<text transform="translate(976 364) rotate(-5)" textLength="10">ця</text>
<text transform="translate(1522 416) rotate(22)" textLength="18">лиця</text>
<text transform="translate(1631 956) rotate(-14)" font-size="9" textLength="12">Го</text>
</g>
<g class="place"><text x="1089" y="556">Гімназія</text><text x="1089" y="566">"Гроно"</text></g>
<g class="place plum"><text x="1616" y="877">ПАТ</text><text x="1616" y="887">"Львівський</text><text x="1616" y="897">жировий</text><text x="1616" y="907">комбінат"</text></g>
<text x="1191" y="1012" font-family="DejaVu Sans" font-size="14" fill="#0092da">P</text><text x="1265" y="797" font-family="DejaVu Sans" font-size="14" fill="#a66a33">P</text><text x="1229" y="743" font-family="DejaVu Sans" font-size="14" fill="#a66a33">P</text>

<g transform="translate(1090 505) scale(.33333)">
<path d="M900 580L990 430M880 600L1000 460" stroke="#c9a25c" stroke-width="12" opacity=".25"/>
<g class="zone">
<ellipse cx="657" cy="665" rx="438" ry="678"/><ellipse cx="451" cy="665" rx="414" ry="630"/><ellipse cx="484" cy="631" rx="387" ry="591"/><ellipse cx="516" cy="628" rx="355" ry="538"/><ellipse cx="543" cy="682" rx="325" ry="540"/><ellipse cx="540" cy="605" rx="328" ry="560"/><ellipse cx="556" cy="635" rx="248" ry="440"/><ellipse cx="577" cy="582" rx="167" ry="256"/><ellipse cx="444" cy="675" rx="133" ry="210"/><ellipse cx="511" cy="665" rx="124" ry="198"/>
</g>
<g class="trk faint"><path d="M360 640L320 850L350 830M410 660L445 555L460 640M560 715L690 815L710 810L780 590L760 500L690 520M560 715L700 780L830 860M690 520L715 400Q735 370 790 400L850 470L870 510M800 560L700 660L640 690M370 870L520 740L540 690M400 820L540 700M545 735L430 840"/></g>
<g class="trk mid"><path d="M350 1000L460 840L550 680M370 980L440 830L530 700M340 600L350 640L410 650L420 620L500 610L560 660L700 660L790 590L840 520M540 730V680M560 660L630 530L600 620L640 570L560 640M340 660L370 630L460 650L540 670M430 690V640"/></g>
<g class="trk bold"><path d="M945 330L865 470L895 510L875 610M345 618L415 630L500 655L558 650L600 640L640 600L750 445Q820 420 835 500L770 560L690 600L620 630L558 662L480 750M558 665L640 715L590 740M620 710L645 680L640 650L620 630"/></g>
<g class="trk core"><path d="M345 618L415 630L500 645L558 655L600 640L640 600L750 445"/></g>
</g>
<g><use href="#stop" x="1396" y="601" width="20" height="20"/><use href="#stop" x="1331" y="639" width="20" height="20"/><use href="#stop" x="1356" y="667" width="20" height="20"/><use href="#stop" x="1313" y="697" width="20" height="20"/><use href="#stop" x="1266" y="716" width="20" height="20"/><use href="#stop" x="1219" y="708" width="20" height="20"/><use href="#stop" x="1194" y="776" width="20" height="20"/><use href="#stop" x="1335" y="774" width="20" height="20"/><circle cx="1207.500" cy="840" r="9.500" fill="#600" opacity=".5"/><circle cx="1207" cy="839" r="9.300" fill="url(#ruby)" stroke="#b33"/></g>
</svg>
              <div class="ctl c-full"><svg width="26" height="26" viewBox="0 0 26 26"><path d="M20 7L14 12M14 7.500V12.500H19M6 19L12 14M12 19V14H7" fill="none" stroke="#000" stroke-width="2"/></svg></div>
              <div class="ctl c-zoom"><b>+</b><b>-</b></div>
              <div class="ctl c-draw">
                <svg viewBox="0 0 26 27"><path d="M8.500 17.500L17.500 8.500" stroke="#444" stroke-width="1.600"/><path d="M6 18h3v3h-3ZM17 6.500h3v3h-3Z" fill="#fff" stroke="#444"/></svg>
                <svg viewBox="0 0 26 27"><path d="M13 7L19 11.500L17.500 18.500H9L7 11.500Z" fill="#444"/></svg>
                <svg viewBox="0 0 26 27"><path d="M8 8H18V18H8Z" fill="#444"/></svg>
                <svg viewBox="0 0 26 27"><circle cx="13" cy="13" r="5.700" fill="#444"/></svg>
                <svg viewBox="0 0 26 27"><path d="M13 20Q8 14 8 12A5 5 0 0 1 18 12Q18 14 13 20Z" fill="#444"/><circle cx="13" cy="12" r="2" fill="#fff"/></svg>
              </div>
              <div class="ctl c-edit">
                <svg viewBox="0 0 26 27"><path d="M16 8H8V19H18V13M12 14L18 7L20 9L13 16Z" fill="none" stroke="#bbb" stroke-width="1.600"/></svg>
                <svg viewBox="0 0 26 27"><path d="M8 10H18V19H8ZM7 8H19M11 6.500H15" fill="#bbb" stroke="#bbb" stroke-width="1.300"/></svg>
              </div>
              <div class="ctl c-layers"><svg width="36" height="36" viewBox="0 0 36 36"><path d="M5 22L18 30L31 22L18 16Z" fill="#999"/><path d="M5 18.500L18 26.500L31 18.500L18 12Z" fill="#aaa" stroke="#fff" stroke-width=".7"/><path d="M5 14.500L18 22.500L31 14.500L18 6.500Z" fill="#ddd" stroke="#aaa" stroke-width=".8"/></svg></div>
              <div class="scale">100 m</div>
              <div class="credit"><a>Leaflet</a> | © <a>OpenStreetMap</a> Contributors</div>
              <div class="popup"><span class="x">×</span>Машина: 22763TA<br>Організаційний підрозділ: Гараж 1<br>Час простою: 6 днів; 18 годин; 43 хвилин<br>Початок зупинки: 2013-12-02 14:41:53.857<br>Нічна стоянка?: ✔<br>Кінець зупинки: 2013-12-09 09:25:10.510<br>Радіус зупинки: 233<br>Відстань: 4168</div>
              <svg class="cursor" width="14" height="22" viewBox="0 0 14 22"><path d="M1 1V17L4.500 13.500L7.500 20L10 19L7 12.500H12.500Z" fill="#fff" stroke="#000" stroke-width="1.200"/></svg>
            </div>
            <div class="vbar"><svg width="16" height="12" viewBox="0 0 16 12"><path d="M4 8L8 3.500L12 8" fill="none" stroke="#888" stroke-width="1.500"/></svg><i></i><svg width="16" height="14" viewBox="0 0 16 14"><path d="M4 5L8 9.500L12 5" fill="none" stroke="#888" stroke-width="1.500"/></svg></div>
            <div class="hbar"><svg width="14" height="16" viewBox="0 0 14 16"><path d="M8 4L4 8L8 12" fill="none" stroke="#888" stroke-width="1.500"/></svg><i></i><svg width="16" height="16" viewBox="0 0 16 16"><path d="M8 4L12 8L8 12" fill="none" stroke="#888" stroke-width="1.500"/></svg></div>
            <div class="corner"></div>
          </div>
        </div>
      </section>
    </div>
  </section>
</main>
</div>
</body>
</html>
```
FILE: styles.css
```css
* { box-sizing: border-box; }
body { margin: 0; width: 1680px; height: 1050px; overflow: hidden; display: flex; flex-direction: column; background: #d6d9e0; color: #000; font: 12px/18px "DejaVu Sans", sans-serif; letter-spacing: .25px; }
svg { display: block; flex: none; }
.defs { position: absolute; }

.topbar { height: 24px; flex: none; display: flex; align-items: center; background: linear-gradient(#5a584f, #3c3b37); color: #dfdbd2; font-family: "Noto Sans", sans-serif; font-size: 15px; letter-spacing: 0; white-space: nowrap; }
.app-name { font-weight: bold; margin-left: 6px; width: 1122px; font-size: 14.3px; }
.tray-text { font: 14.500px "Noto Sans", sans-serif; fill: #dfdbd2; }
.tray-end { margin-left: 12px; }
.clock { margin-left: 11px; width: 124px; font-size: 14px; letter-spacing: 0; }
.cog { margin-left: 10px; }

.desktop { flex: 1; display: flex; min-height: 0; }
.launcher { width: 65px; flex: none; padding: 6px 0 0 6px; display: flex; flex-direction: column; gap: 7px; background: linear-gradient(90deg, rgba(0,0,0,.12), transparent 20%, transparent 85%, rgba(0,0,0,.2)), linear-gradient(#42565a, #5a6e68 12%, #4f6461 25%, #32474a 45%, #42595a 60%, #30464a 80%, #2c4247); }
.tile { width: 52px; height: 52px; flex: none; border-radius: 5px; position: relative; box-shadow: inset 0 0 0 1px rgba(255,255,255,.25), inset 0 12px 12px -6px rgba(255,255,255,.35); }
.tile svg { width: 52px; height: 52px; overflow: visible; }
.mark::before { content: ""; position: absolute; left: -6px; top: 22px; border: 4px solid transparent; border-left: 5px solid #ccc; border-right: 0; }
.t-dash { background: #64827f; border-radius: 9px; }
.t-violet { background: #8650b4; }
.t-brown { background: #b0713f; }
.t-blue { background: #4a80bb; }
.t-red { background: #b23438; }
.t-cyan { background: #3f9fc4; }
.t-gray { background: #9b9b9b; }
.t-navy { background: #3661ab; }
.t-tan { background: #ab7538; }
.t-sage { background: #aaaf94; }
.t-mint { background: #93aaa5; }
.stack { width: 65px; height: 145px; margin: -8px 0 0 -6px; }

.work { flex: 1; display: flex; padding: 7px 7px 7px 7px; min-width: 0; }
.sidebar { width: 303px; flex: none; background: #fff; border: 1px solid #8a8d94; box-shadow: inset -1px 0 #c9ccd2; }
.find { display: flex; align-items: center; gap: 3px; padding: 4px 0 0 4px; height: 28px; }
.input { height: 23px; background: #fff; border: 1px solid #b7b9be; border-top: 1px solid #7d8086; box-shadow: inset 0 1px #d3d5d9; padding: 1px 3px 0; line-height: 21px; white-space: nowrap; }
.find-input { width: 241px; color: #555; }
.tree { list-style: none; margin: 9px 0 0; padding: 0; }
.tree li { height: 18px; line-height: 20px; padding-left: 16px; position: relative; white-space: nowrap; }
.tree li.sub { padding-left: 32px; }
.tree .it { font-style: italic; letter-spacing: .16px; }
.tree li.selected { background: #39698a; color: #fff; }
.tree li.open::before { content: ""; position: absolute; left: 4px; top: 6px; border: 3.5px solid transparent; border-top: 7px solid #555; border-bottom: 0; }
.tree li.closed::before { content: ""; position: absolute; left: 4px; top: 6px; border: 3.5px solid transparent; border-left: 7px solid #666; border-right: 0; }
.splitter { width: 9px; flex: none; }

.editor { flex: 1; min-width: 0; border: 1px solid #8a8d94; box-shadow: inset 1px 0 #eef2f9, inset -1px 0 #eef2f9, inset 0 -1px #eef2f9; display: flex; flex-direction: column; }
.tabs { height: 23px; flex: none; position: relative; display: flex; align-items: center; border-bottom: 1px solid #fff; }
.tab-shapes { position: absolute; left: 0; top: 1px; }
.tab { position: relative; padding-top: 1px; line-height: 22px; letter-spacing: .1px; }
.tab-info { margin-left: 30px; width: 37px; }
.tab-close { position: relative; margin-left: 9px; }
.page { flex: 1; min-height: 0; padding: 5px 7px 8px; display: flex; flex-direction: column; }
.toolbar { height: 33px; flex: none; border: 1px solid #8d9097; box-shadow: 0 1px #fff, 1px 0 #fff, inset 1px 1px #fff; display: flex; align-items: center; }
.tools { padding-left: 5px; gap: 6px; }
.tools svg { margin-top: 4px; }
.criteria { margin-top: 7px; height: 166px; flex: none; border: 1px solid #9296a0; }
.criteria header { height: 23px; border-bottom: 1px solid #70747c; background: linear-gradient(#f8f9fb, #d8dbe1 55%, #dfe2e8 70%, #eff3fb); display: flex; align-items: center; justify-content: space-between; padding: 0 13px 0 3px; }
.criteria header span { padding-top: 2px; }
.form { display: grid; grid-template-columns: 195px 424px 217px 423px; grid-auto-rows: 23px; row-gap: 10px; padding: 6px 0 0 5px; align-items: center; }
.form label { font-weight: bold; color: #606063; white-space: nowrap; letter-spacing: .06px; }
.form label.second { padding-left: 22px; }
.focus { display: flex; align-items: center; justify-content: space-between; outline: 1.500px solid #74a5d2; }
.focus i { width: 1px; height: 15px; background: #000; }
.blue { background: #cfe6fb; color: #3d5365; border-color: #92b2d0; outline: 2px solid #accbe6; }
.range { display: flex; align-items: center; justify-content: space-between; }
.range .input { width: 198px; }
.checks { display: flex; margin-top: 2px; }
.checks span { width: 226px; flex: none; display: flex; align-items: center; gap: 6px; }
.actions { margin-top: 8px; height: 25px; flex: none; display: flex; align-items: center; padding: 0 2px; gap: 10px; }
button { height: 25px; border: 1px solid #83868d; border-bottom-color: #484c53; border-radius: 5px; background: linear-gradient(#fcfcfd, #d9dce2 60%, #f2f6fe); padding: 0; font: inherit; letter-spacing: .15px; color: #000; display: flex; justify-content: center; align-items: center; flex: none; box-shadow: 0 1px #c2c5cb; }
.b69 { width: 69px; } .b67 { width: 67px; } .b116 { width: 116px; gap: 17px; padding: 0 0 2px 8px; } .b66 { width: 66px; }
.push { margin-left: auto; }
.pager { display: flex; gap: 10px; margin-left: 287px; }
.pager button { width: 40px; border-color: #bdc0c6; background: linear-gradient(#e0e2e7, #d3d6dc); box-shadow: none; }
.page-no { margin-left: 12px; letter-spacing: .22px; }

.result { margin-top: 7px; flex: 1; min-height: 0; border: 1px solid #8d919b; box-shadow: inset 1px 1px #eef2f9, inset -1px -1px #eef2f9; padding: 2px; display: flex; flex-direction: column; }
.rtools { padding-left: 5px; gap: 6px; margin-right: 1px; }
.rtools svg { margin-top: 2px; }
.dots { height: 25px; border-left: 1px dotted #8d9097; }
.split { display: flex; padding: 8px 0 0 3px; flex: 1; min-height: 0; }
.table-pane { width: 564px; margin-top: 2px; height: 678px; flex: none; border: 1px solid #8d9199; display: flex; flex-direction: column; }
table { width: 562px; table-layout: fixed; border-collapse: separate; border-spacing: 0; }
.c1 { width: 90px; } .c2 { width: 72px; } .c3 { width: 150px; } .c4 { width: 155px; } .c5 { width: 90px; } .c6 { width: 5px; }
th { height: 30px; padding: 2px 0 0 20px; text-align: left; font-weight: normal; background: linear-gradient(#f9fafb, #d9dce2 55%, #dde0e6 70%, #eef2fa); border-bottom: 1px solid #6b6f77; border-right: 1px solid #9a9da5; position: relative; white-space: nowrap; }
th::before, th::after { content: ""; position: absolute; left: 6px; border: 4px solid transparent; }
th::before { top: 3px; border-bottom: 7px solid #c6c7c9; border-top: 0; }
th::after { bottom: 2px; border-top: 7px solid #c6c7c9; border-bottom: 0; }
th.last { padding: 0; border-right: 0; }
th.last::before, th.last::after { display: none; }
td { height: 26px; padding: 0 0 0 5px; border-right: 1px solid #d6d9e0; border-bottom: 1px solid #d6d9e0; background: #ffa07a; white-space: nowrap; overflow: hidden; line-height: 20px; letter-spacing: .22px; }
tr:nth-child(even) td { background: #f89b76; }
tr:last-child td { border-bottom: 0; height: 25px; }
td:last-child { border-right: 0; padding: 0; }
td svg { width: 14px; height: 16px; margin: 0 auto; position: relative; left: -3px; }
.hscroll { margin-top: auto; height: 16px; display: flex; align-items: center; background: linear-gradient(#b8bbc2, #eceef2); }
.arr { width: 17px; height: 16px; line-height: 15px; font-size: 10px; text-align: center; color: #333; background: linear-gradient(#f5f6f8, #d5d8df); letter-spacing: 0; }
.track { flex: 1; height: 16px; background: linear-gradient(#777a80, #b3b5bb 20%, #d8dade); }
.thumb { width: 294px; height: 16px; border: 1.500px solid #38506a; border-top-width: 1px; border-radius: 2px 2px 12px 12px; background: linear-gradient(#f3f8fd, #a9c1d8 50%, #d8edfb); }
.vsplit { width: 13px; flex: none; background: linear-gradient(90deg, transparent 3px, #a5a8af 3px, #a5a8af 4px, transparent 4px, transparent 12px, #8f939b 12px); }
.map-pane { flex: 1; display: grid; grid-template: 664px 16px / 669px 16px; }
.map { position: relative; overflow: hidden; width: 669px; height: 664px; border-top: 1px solid #d0d0d0; }
.rail-base { fill: none; stroke: #999; stroke-width: 2.7; }
.rail-dash { fill: none; stroke: #f4f2ee; stroke-width: .9; stroke-dasharray: 4 5; }
.road-case-a { fill: none; stroke: #bbb; stroke-width: 30; stroke-linecap: round; stroke-linejoin: round; }
.road-a { fill: none; stroke: #fff; stroke-width: 26; stroke-linecap: round; stroke-linejoin: round; }
.road-case-b { fill: none; stroke: #bbb; stroke-width: 21; stroke-linecap: round; }
.road-b { fill: none; stroke: #fff; stroke-width: 17; stroke-linecap: round; }
.yellow-case, .orange-case { fill: none; stroke: #bbae80; stroke-width: 12.5; }
.yellow-fill { fill: none; stroke: #f6f5b7; stroke-width: 11.5; }
.orange-fill { fill: none; stroke: #f7d2a3; stroke-width: 11.5; }
.bld { fill: #c2aeae; stroke: #aa9797; stroke-width: 1.5; }
.pole { fill: #eee; stroke: #666; stroke-width: .8; }
.street { font: 8px "DejaVu Sans", sans-serif; letter-spacing: 0; fill: #000; stroke: #fff; stroke-width: 1px; stroke-opacity: .45; paint-order: stroke; }
.place { font: 8.4px "DejaVu Sans", sans-serif; letter-spacing: -.3px; text-anchor: middle; fill: #24245d; stroke: #fff; stroke-width: 1.2px; stroke-opacity: .7; paint-order: stroke; }
.plum { fill: #6c436b; }
.zone { fill: #ff4500; fill-opacity: .2; stroke: #ff4500; stroke-opacity: .6; stroke-width: 14; }
.trk { fill: none; stroke-width: 15; stroke-linejoin: round; stroke-linecap: round; }
.faint { stroke: #aa3552; opacity: .6; }
.mid { stroke: #77258a; opacity: .75; }
.bold { stroke: #3d0fce; opacity: .72; }
.core { stroke: #3a0cc8; stroke-width: 19; opacity: .8; }

.ctl { position: absolute; background: #fff; border-radius: 4px; box-shadow: 0 1px 4px rgba(0,0,0,.5); }
.c-full { left: 10px; top: 10px; width: 26px; height: 26px; }
.c-zoom { left: 10px; top: 46px; width: 26px; height: 54px; }
.c-zoom b { display: block; height: 27px; line-height: 27px; text-align: center; font-size: 15px; letter-spacing: 0; }
.c-zoom b + b { border-top: 1px solid #ccc; }
.c-draw { left: 10px; top: 433px; width: 26px; }
.c-edit { left: 10px; top: 579px; width: 26px; background: #f4f4f4; }
.c-draw svg, .c-edit svg { width: 26px; height: 26.8px; }
.c-draw svg + svg, .c-edit svg + svg { border-top: 1px solid #bbb; }
.c-layers { right: 9px; top: 10px; width: 36px; height: 36px; }
.scale { position: absolute; left: 5px; top: 642px; width: 69px; height: 17px; border: 2px solid #777; border-top: 0; background: rgba(255,255,255,.5); font-size: 11px; line-height: 15px; padding-left: 6px; letter-spacing: 0; }
.credit { position: absolute; right: 0; bottom: 0; width: 230px; height: 15px; line-height: 15px; background: rgba(255,255,255,.7); padding-left: 6px; font-size: 11px; letter-spacing: .04px; white-space: nowrap; color: #222; }
.credit a { color: #0078a8; }
.popup { position: absolute; left: 237px; top: 14px; width: 311px; height: 156px; padding: 14px 0 0 20.500px; border-radius: 12px; background: #fff; line-height: 16px; letter-spacing: 0; white-space: nowrap; box-shadow: 0 3px 12px rgba(0,0,0,.4); }
.popup::after { content: ""; position: absolute; left: 142px; top: 155px; border: 13px solid transparent; border-top-color: #fff; border-bottom: 0; }
.popup .x { position: absolute; right: 7px; top: 1px; font: bold 16px "DejaVu Sans", sans-serif; color: #c3c3c3; }
.cursor { position: absolute; left: 402px; top: 192px; }
.vbar { background: #e4e4e4; display: flex; flex-direction: column; align-items: center; padding-top: 2px; }
.vbar i { flex: 1; width: 12px; border: 1px solid #aaa; border-radius: 3px; background: linear-gradient(90deg, #f8f8f8, #e0e0e0); }
.hbar { background: #e4e4e4; display: flex; align-items: center; }
.hbar i { flex: 1; height: 12px; border: 1px solid #aaa; border-radius: 3px; background: linear-gradient(#f5f5f5, #e8e8e8); }
.corner { background: #fff; }
```
